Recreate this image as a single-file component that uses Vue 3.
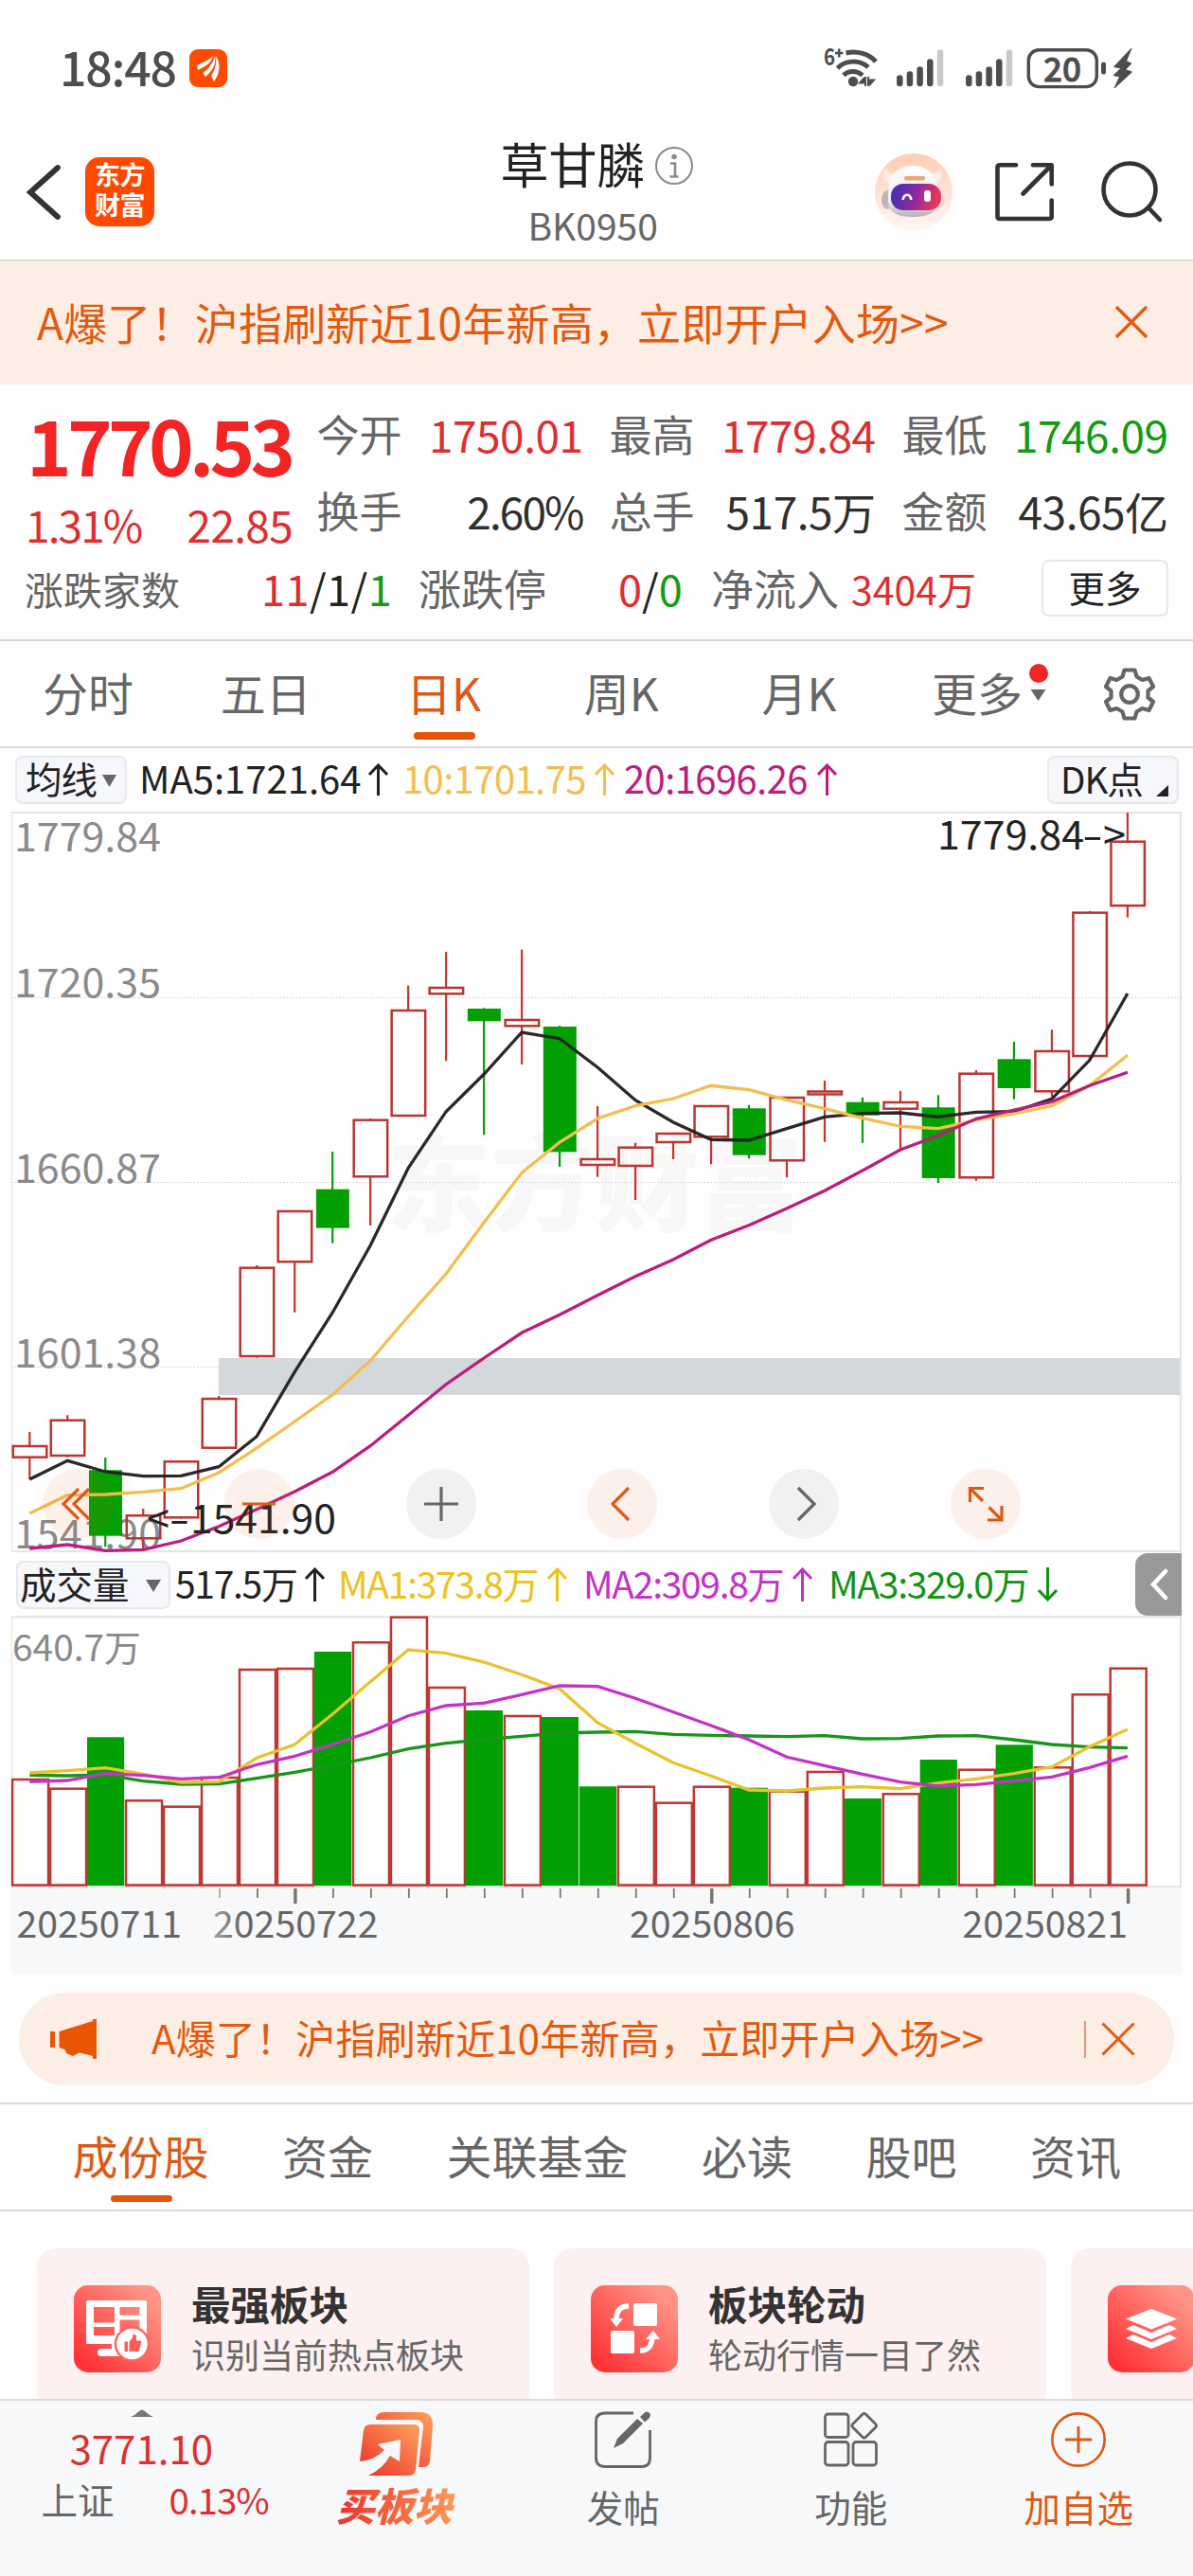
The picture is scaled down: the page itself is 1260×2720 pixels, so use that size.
<script setup>
const STEP = 39.986
const X0 = 31.3
const cx = (i) => X0 + STEP * i
const line = (ys) => ys.map((y, i) => `${cx(i).toFixed(1)},${y}`).join(' ')

// [direction, body top, body bottom, high, low]
const candles = [
  ['r', 1527, 1538.7, 1512, 1562], ['r', 1499.7, 1537, 1494.3, 1538.7], ['g', 1552.3, 1621.7, 1539, 1633.3],
  ['r', 1600.3, 1624.3, 1593, 1638], ['r', 1543.3, 1602.3, 1543, 1603.5], ['r', 1477, 1528.7, 1474, 1528],
  ['r', 1338.7, 1432, 1336, 1433.7], ['r', 1279, 1332.3, 1278, 1385.7], ['g', 1255.7, 1296.7, 1216, 1312.7],
  ['r', 1182.7, 1242.3, 1181, 1294], ['r', 1067, 1178, 1040.7, 1178], ['r', 1043, 1049.3, 1005, 1120.3],
  ['g', 1065, 1078.3, 1064.3, 1198.3], ['r', 1077, 1083.3, 1002.7, 1124], ['g', 1084, 1216.3, 1083, 1232],
  ['r', 1224, 1230, 1168, 1242.7], ['r', 1211.7, 1231, 1206.7, 1267], ['r', 1197, 1206, 1196, 1224],
  ['r', 1168, 1200.3, 1166.7, 1229.3], ['g', 1170.3, 1219.7, 1166.7, 1223.3], ['r', 1159, 1225.3, 1158, 1243.3],
  ['r', 1152.5, 1155.5, 1141, 1205.7], ['g', 1163.7, 1177.7, 1158.7, 1206.7], ['r', 1164, 1170.7, 1152, 1213.3],
  ['g', 1169.3, 1244, 1156.3, 1249], ['r', 1133.7, 1243.3, 1130, 1246.7], ['g', 1118.3, 1149, 1100, 1160.7],
  ['r', 1110, 1152.3, 1087.3, 1158], ['r', 963.7, 1115, 962, 1118.7], ['r', 888.7, 956.3, 858, 968.7],
]
const ma5 = line([1562, 1542.3, 1554, 1558.7, 1558.3, 1548.7, 1516.7, 1448.7, 1386, 1315, 1233.3, 1173.7, 1134.3, 1090, 1096.7, 1127, 1161.7, 1185, 1203.3, 1204, 1191.7, 1179.3, 1175.7, 1175, 1179.3, 1174.3, 1173.7, 1160.3, 1119.3, 1049])
const ma10 = line([1598, 1578.7, 1578, 1575.3, 1571.7, 1555, 1529, 1501, 1472.7, 1436.7, 1390, 1345, 1291, 1238.3, 1206, 1181, 1167.7, 1160, 1146.3, 1150.7, 1161.3, 1170.7, 1180.7, 1189.3, 1191.7, 1182.7, 1176, 1167.7, 1146, 1114.3])
const ma20 = line([1635, 1631, 1637.3, 1636.3, 1627, 1611.7, 1593.7, 1575, 1554.3, 1526.7, 1494.3, 1461.7, 1434, 1407.3, 1388.3, 1367.7, 1347.7, 1330, 1309.3, 1293.7, 1276, 1257.3, 1236, 1214, 1199, 1181.3, 1172, 1163.3, 1146.3, 1132.3])

const volumes = [1879, 1888.7, 1834.3, 1901.3, 1907.7, 1877, 1763, 1762, 1744, 1734.3, 1707.7, 1782, 1806, 1812, 1813, 1886.3, 1886.7, 1903.7, 1886.7, 1887.7, 1891.7, 1871, 1899, 1894.3, 1858, 1868.7, 1842.3, 1866.3, 1789.3, 1761.7]
const falling = new Set([2, 8, 12, 14, 15, 19, 22, 24, 26])
const vol1 = line([1872, 1869.7, 1866.7, 1873.3, 1882, 1881.3, 1856.3, 1842, 1810, 1775.7, 1742, 1745.7, 1755, 1768.3, 1783.3, 1819, 1840.7, 1861.3, 1875.3, 1890, 1891, 1888, 1886.7, 1888.7, 1882.7, 1878.3, 1872.7, 1865.7, 1844.3, 1826])
const vol2 = line([1881.3, 1880, 1872.7, 1874.7, 1878.3, 1876.7, 1863.3, 1854.3, 1842, 1828.7, 1811.7, 1801, 1798.3, 1789.3, 1780, 1780.7, 1793.3, 1807.7, 1822, 1837, 1855.3, 1864.3, 1873.3, 1881.7, 1886, 1884.3, 1880.3, 1876.3, 1866.3, 1854.3])
const vol3 = line([1874.3, 1875, 1874, 1880.7, 1884, 1883.7, 1877.7, 1871.3, 1864, 1856, 1846.7, 1840.7, 1836.7, 1833.3, 1830, 1829, 1828.3, 1831.3, 1832.3, 1833, 1833.7, 1832.7, 1836, 1835.7, 1833, 1832.7, 1837, 1842, 1844.7, 1845.7])

const ticks = Array.from({ length: 25 }, (_, k) => k + 5)
const bigTicks = [7, 18, 29]

const scale = [['1779.84', 899], ['1720.35', 1053], ['1660.87', 1248.7], ['1601.38', 1443.7], ['1541.90', 1635]]

const stats = [
  ['今开', '1750.01', 'up'], ['最高', '1779.84', 'up'], ['最低', '1746.09', 'down'],
  ['换手', '2.60%', 'pct'], ['总手', '517.5万', ''], ['金额', '43.65亿', ''],
]
const infoTabs = ['成份股', '资金', '关联基金', '必读', '股吧', '资讯']
</script>

<template>
  <div class="page">
    <div class="status">
      <span class="clock">18:48</span>
      <svg class="badge" width="40" height="40" viewBox="0 0 40 40">
        <rect width="40" height="40" rx="9" fill="#ff4a00" />
        <path d="M8 17C15 13 20 12 25 7C23 15 17 18 9 22ZM14 25C20 21 25 15 27 7C29 16 24 23 17 29ZM23 28C27 22 29 15 28 7C33 14 33 25 26 34Z" fill="#fff" />
      </svg>
      <svg class="sys" width="340" height="60" viewBox="865 42 340 60">
        <text x="870" y="69" font-size="24" font-weight="700" fill="#4d4d4d" textLength="12" lengthAdjust="spacingAndGlyphs">6</text>
        <path d="M882 56H890.500M886.200 51.500V60.500" stroke="#4d4d4d" stroke-width="2.600" />
        <g fill="none" stroke="#4d4d4d" stroke-width="5">
          <path d="M893.500 56C905 53 918 57 925 65" />
          <path d="M884.500 72C893 63 908 63 917 71" />
          <path d="M891 79.500C896 74 905 74 911 79.500" />
        </g>
        <circle cx="901" cy="86" r="5.200" fill="#4d4d4d" />
        <path d="M914 81V91M913 82L908 87.500H914M917 91V81M918 90L923 84.500H917" stroke="#4d4d4d" stroke-width="2" fill="#4d4d4d" />
        <g v-for="o in [0, 73]" :key="o" stroke-width="6.500" stroke-linecap="round" stroke="#4d4d4d">
          <path :d="`M${950.3 + o} 82.500V88M${960.900 + o} 78.500V88M${971.600 + o} 73.500V88M${982.300 + o} 65.500V88`" />
          <path :d="`M${993 + o} 55.500V88`" stroke="#cacaca" />
        </g>
        <rect x="1086.300" y="52.800" width="72" height="38.800" rx="11" fill="none" stroke="#4d4d4d" stroke-width="3.400" />
        <text x="1122" y="86" font-size="35" font-weight="500" fill="#4d4d4d" stroke="#4d4d4d" stroke-width="0.800" text-anchor="middle">20</text>
        <rect x="1163" y="65.500" width="5" height="13" rx="2.500" fill="#4d4d4d" />
        <path d="M1195 51L1176.500 70.500L1184 72L1176 79.500L1182.500 81L1177 93L1195.500 76L1188.500 73.500L1195 67L1189.500 64.500Z" fill="#4d4d4d" stroke="#4d4d4d" />
      </svg>
    </div>

    <header class="head">
      <svg class="back" width="40" height="64" viewBox="27 171 40 64">
        <path d="M61 177L32 203L61 229" fill="none" stroke="#333" stroke-width="5.800" stroke-linecap="round" />
      </svg>
      <div class="logo"><span>东方</span><span>财富</span></div>
      <div class="title">
        <div class="name">
          草甘膦
          <svg width="42" height="42" viewBox="0 0 42 42">
            <circle cx="21" cy="21" r="19" fill="none" stroke="#8a8a8a" stroke-width="2" />
            <circle cx="21" cy="11.500" r="2.800" fill="#8a8a8a" />
            <path d="M17 18.500H22V32.500M16.500 32.500H25.500" fill="none" stroke="#8a8a8a" stroke-width="2.600" />
          </svg>
        </div>
        <div class="code">BK0950</div>
      </div>
      <svg class="robot" width="84" height="84" viewBox="0 0 84 84">
        <defs>
          <linearGradient id="rb" x1="0" y1="0" x2="0" y2="1"><stop offset="0" stop-color="#ffcdb5" /><stop offset="1" stop-color="#fff7f3" /></linearGradient>
          <linearGradient id="visor" x1="0" y1="0" x2="1" y2="0.200"><stop offset="0" stop-color="#3b2fb4" /><stop offset="0.550" stop-color="#8a2a9e" /><stop offset="1" stop-color="#e8385a" /></linearGradient>
          <linearGradient id="skin" x1="0" y1="0" x2="0" y2="1"><stop offset="0" stop-color="#fff" /><stop offset="0.700" stop-color="#efe9ec" /><stop offset="1" stop-color="#b9aeb5" /></linearGradient>
        </defs>
        <circle cx="42" cy="42" r="41" fill="url(#rb)" />
        <path d="M13 17C8 23 9 31 18 33L27 22C18 23 15 22 13 17ZM68 17C73 23 72 31 64 33L56 22C65 23 67 22 68 17Z" fill="#fbefea" />
        <ellipse cx="14" cy="50" rx="6" ry="10" fill="#bfb6bc" />
        <ellipse cx="69" cy="49" rx="6" ry="10" fill="#e3dcdf" />
        <path d="M15 42C16 22 27 14 41 14S66 22 68 42V52C67 64 57 68 41 68S16 64 15 52Z" fill="url(#skin)" />
        <rect x="32" y="25" width="22" height="4.500" rx="2" fill="#e8a878" />
        <rect x="18" y="33" width="53" height="28" rx="13" fill="url(#visor)" />
        <path d="M30.500 50C32 43 38 43 39.500 50" fill="none" stroke="#fff" stroke-width="2.600" />
        <rect x="53" y="40" width="7" height="12" rx="3" fill="#fff" />
      </svg>
      <svg class="share" width="66" height="66" viewBox="1049 170 66 66">
        <g fill="none" stroke="#333" stroke-width="4.600" stroke-linecap="round" stroke-linejoin="round">
          <path d="M1073 174.300H1056Q1053.500 174.300 1053.500 177V228.500Q1053.500 231 1056 231H1108Q1110.700 231 1110.700 228.500V211.500" />
          <path d="M1091 174.300H1110.700V194.500M1109.500 175.500L1080.500 204.500" />
        </g>
      </svg>
      <svg class="search" width="68" height="68" viewBox="1161 168 68 68">
        <g fill="none" stroke="#333" stroke-width="4.600" stroke-linecap="round">
          <circle cx="1193" cy="200" r="27.500" />
          <path d="M1213 219.500L1225 232" />
        </g>
      </svg>
    </header>

    <div class="banner">
      <span>A爆了！沪指刷新近10年新高，立即开户入场&gt;&gt;</span>
      <svg width="36" height="36" viewBox="0 0 36 36"><path d="M2 2L34 34M34 2L2 34" stroke="#e2590f" stroke-width="3.400" /></svg>
    </div>

    <section class="quote">
      <div class="quote-top">
        <div class="price-box">
          <div class="price">1770.53</div>
          <div class="change"><span class="rate">1.31%</span><span>22.85</span></div>
        </div>
        <div class="stats">
          <div v-for="s in stats" :key="s[0]" class="stat"><label>{{ s[0] }}</label><b :class="s[2]">{{ s[1] }}</b></div>
        </div>
      </div>
      <div class="quote-row">
        <label class="small w-a">涨跌家数</label>
        <span class="w-b"><i class="up">11</i>/1/<i class="down">1</i></span>
        <label class="w-c">涨跌停</label>
        <span class="w-d"><i class="up">0</i>/<i class="down">0</i></span>
        <label class="w-e">净流入</label>
        <span class="up small w-f">3404万</span>
        <button class="more">更多</button>
      </div>
    </section>

    <nav class="periods">
      <span>分时</span><span>五日</span><span class="on">日K</span><span>周K</span><span>月K</span>
      <span class="more-tab">更多
        <svg width="24" height="42" viewBox="1085 699 24 42"><circle cx="1097" cy="710" r="10" fill="#f22424" /><path d="M1088.500 727H1104.500L1096.500 739Z" fill="#666" /></svg>
      </span>
      <svg class="gear" width="58" height="58" viewBox="-29 -29 58 58">
        <g fill="none" stroke="#666" stroke-width="4.200" stroke-linejoin="round">
          <path d="M-5.500 -25.500H5.500L7.500 -18.500L13.500 -15L20.500 -17L25 -8L19.500 -3.500V3.500L25 8L20.500 17L13.500 15L7.500 18.500L5.500 25.500H-5.500L-7.500 18.500L-13.500 15L-20.500 17L-25 8L-19.500 3.500V-3.500L-25 -8L-20.500 -17L-13.500 -15L-7.500 -18.500Z" />
          <circle r="8.800" />
        </g>
      </svg>
    </nav>

    <div class="legend ma">
      <span class="chip chip-ma">均线<svg width="15" height="13" viewBox="0 0 15 13"><path d="M0 0H15L7.500 13Z" fill="#666" /></svg></span>
      <span class="m1">MA5:1721.64<svg class="arr" viewBox="0 0 21 34"><path d="M10.500 34V2M1 12L10.500 2L20 12" /></svg></span>
      <span class="m2">10:1701.75<svg class="arr" viewBox="0 0 21 34"><path d="M10.500 34V2M1 12L10.500 2L20 12" /></svg></span>
      <span class="m3">20:1696.26<svg class="arr" viewBox="0 0 21 34"><path d="M10.500 34V2M1 12L10.500 2L20 12" /></svg></span>
      <span class="chip chip-dk">DK点<svg width="13" height="12" viewBox="0 0 13 12"><path d="M13 0V12H0Z" fill="#222" /></svg></span>
    </div>

    <div class="kline">
      <svg width="1260" height="784" viewBox="0 856 1260 784">
        <text x="628" y="1292" class="mark" text-anchor="middle" textLength="440" lengthAdjust="spacingAndGlyphs">东方财富</text>
        <g stroke="#cfcfcf" stroke-width="1.200" stroke-dasharray="1.500 2"><path d="M12 1053.500H1247M12 1248.500H1247M12 1443.500H1247" /></g>
        <rect x="231" y="1434" width="1016" height="39" fill="#d4d7dc" />
        <path d="M12 858H1247V1638H12" fill="none" stroke="#e4e4e4" stroke-width="2" />
        <path d="M12.500 858V1638" stroke="#e4e4e4" />
        <text v-for="s in scale" :key="s[0]" x="15" :y="s[1]" class="scale" textLength="155" lengthAdjust="spacingAndGlyphs">{{ s[0] }}</text>
        <g v-for="(c, i) in candles" :key="i">
          <template v-if="c[0] === 'r'">
            <path :d="`M${cx(i)} ${c[3]}V${c[1]}M${cx(i)} ${c[2]}V${c[4]}`" stroke="#c43430" stroke-width="2.200" />
            <rect :x="cx(i) - 17.500" :y="c[1]" width="35.500" :height="c[2] - c[1]" fill="none" stroke="#b93632" stroke-width="2.500" />
          </template>
          <template v-else>
            <path :d="`M${cx(i)} ${c[3]}V${c[4]}`" stroke="#0b9a0b" stroke-width="2.200" />
            <rect :x="cx(i) - 17.300" :y="c[1]" width="35" :height="c[2] - c[1]" fill="#02a002" />
          </template>
        </g>
        <g fill="none" stroke-width="3.300">
          <polyline :points="ma5" stroke="#222" stroke-opacity="0.970" />
          <polyline :points="ma10" stroke="#f2be50" />
          <polyline :points="ma20" stroke="#bb1e7c" />
        </g>
        <text x="990" y="896.700" class="peak" textLength="155" lengthAdjust="spacingAndGlyphs">1779.84</text>
        <text x="1143" y="896.700" class="peak" textLength="22" lengthAdjust="spacingAndGlyphs">-</text>
        <text x="1165" y="896.700" class="peak" textLength="24" lengthAdjust="spacingAndGlyphs">&gt;</text>
        <text x="155" y="1618.700" class="peak" textLength="24" lengthAdjust="spacingAndGlyphs">&lt;</text>
        <text x="178.500" y="1618.700" class="peak" textLength="22" lengthAdjust="spacingAndGlyphs">-</text>
        <text x="201" y="1618.700" class="peak" textLength="154" lengthAdjust="spacingAndGlyphs">1541.90</text>
      </svg>
      <div class="tools">
        <button class="warm"><svg viewBox="0 0 74 74"><path d="M38 21L22 37L38 53M49 21L33 37L49 53" /></svg></button>
        <button class="warm"><svg viewBox="0 0 74 74"><path d="M19 37H54" /></svg></button>
        <button><svg viewBox="0 0 74 74"><path d="M19 37H55M37 19V55" /></svg></button>
        <button class="warm"><svg viewBox="0 0 74 74"><path d="M44 20L27 37L44 54" /></svg></button>
        <button><svg viewBox="0 0 74 74"><path d="M31 20L48 37L31 54" /></svg></button>
        <button class="warm"><svg viewBox="0 0 74 74"><path d="M20.500 35V20.500H35M20.500 20.500L34 34M54 39V54H39M54 54L40.500 40.500" /></svg></button>
      </div>
    </div>

    <div class="legend vol">
      <span class="chip chip-vol">成交量<svg width="16" height="13" viewBox="0 0 16 13"><path d="M0 0H16L8 13Z" fill="#666" /></svg></span>
      <span class="v0">517.5万<svg class="arr" viewBox="0 0 21 36"><path d="M10.500 36V2M1 12L10.500 2L20 12" /></svg></span>
      <span class="v1">MA1:373.8万<svg class="arr" viewBox="0 0 21 36"><path d="M10.500 36V2M1 12L10.500 2L20 12" /></svg></span>
      <span class="v2">MA2:309.8万<svg class="arr" viewBox="0 0 21 36"><path d="M10.500 36V2M1 12L10.500 2L20 12" /></svg></span>
      <span class="v3">MA3:329.0万<svg class="arr" viewBox="0 0 21 36"><path d="M10.500 0V34M1 24L10.500 34L20 24" /></svg></span>
      <span class="drawer"><svg width="20" height="34" viewBox="0 0 20 34"><path d="M17 3L4 17L17 31" fill="none" stroke="#fff" stroke-width="4.500" stroke-linecap="round" /></svg></span>
    </div>

    <svg class="volume" width="1260" height="380" viewBox="0 1706 1260 380">
      <defs>
        <linearGradient id="fade" gradientUnits="userSpaceOnUse" x1="222" y1="0" x2="256" y2="0"><stop offset="0" stop-color="#aaa" /><stop offset="1" stop-color="#666" /></linearGradient>
      </defs>
      <rect x="12" y="1993" width="1236" height="92" fill="#f7f8fa" />
      <path d="M12 1707.300H1247V1992H12" fill="none" stroke="#e4e4e4" stroke-width="2" />
      <path d="M12.500 1707V1992" stroke="#e4e4e4" />
      <text x="13" y="1753.700" class="volmax" textLength="136" lengthAdjust="spacingAndGlyphs">640.7万</text>
      <template v-for="(v, i) in volumes" :key="i">
        <rect v-if="falling.has(i)" :x="cx(i) - 19.300" :y="v" width="39.200" :height="1991 - v" fill="#02a002" />
        <rect v-else :x="cx(i) - 18.200" :y="v" width="38" :height="1990.500 - v" fill="none" stroke="#bd3733" stroke-width="2.500" />
      </template>
      <g fill="none" stroke-width="3.300">
        <polyline :points="vol3" stroke="#1b941b" />
        <polyline :points="vol1" stroke="#e8c22f" />
        <polyline :points="vol2" stroke="#c433c8" />
      </g>
      <g stroke="#777">
        <path v-for="i in ticks" :key="i" :d="`M${cx(i) + 0.700} 1994V${bigTicks.includes(i) ? 2010 : 2004}`" :stroke-width="bigTicks.includes(i) ? 3.500 : 1.800" :stroke="i === 5 ? '#aaa' : '#777'" />
      </g>
      <g class="dates">
        <text x="17.500" y="2046">20250711</text>
        <text x="225" y="2046" fill="url(#fade)">20250722</text>
        <text x="665" y="2046">20250806</text>
        <text x="1016.500" y="2046">20250821</text>
      </g>
    </svg>

    <div class="pill">
      <svg class="horn" width="50" height="44" viewBox="52 2131 50 44"><path d="M53 2145H58V2162H53ZM62.500 2145L98 2134V2132H102V2174H98V2171L84 2167.500L77 2171L70 2168L69 2164.500L62.500 2162Z" fill="#e85504" /></svg>
      <span>A爆了！沪指刷新近10年新高，立即开户入场&gt;&gt;</span>
      <i></i>
      <svg class="x" width="36" height="36" viewBox="0 0 36 36"><path d="M1.500 1.500L34.500 34.500M34.500 1.500L1.500 34.500" stroke="#e2590f" stroke-width="3" /></svg>
    </div>

    <nav class="info">
      <span v-for="(t, i) in infoTabs" :key="t" :class="{ on: i === 0 }">{{ t }}</span>
    </nav>

    <div class="cards">
      <div class="card">
        <svg width="92" height="92" viewBox="0 0 92 92">
          <defs><linearGradient id="ic" x1="0" y1="1" x2="1" y2="0"><stop offset="0.100" stop-color="#ff3236" /><stop offset="0.850" stop-color="#ff9384" /></linearGradient></defs>
          <rect width="92" height="92" rx="15" fill="url(#ic)" />
          <path d="M13 18Q13 16 15 16H75Q77 16 77 18V62H13ZM21 23V39.500H43V23ZM48.500 23V31.500H69.500V23ZM21 44V53H43V44ZM48.500 36.500V53H69.500V36.500Z" fill="#fff" fill-rule="evenodd" />
          <path d="M40 61V67H29Q25 67 25 71T29 75H60V61Z" fill="#fff" />
          <circle cx="61.500" cy="62" r="17.500" fill="#fff" stroke="#ff6660" stroke-width="2.500" />
          <path d="M53.500 59.500H57V70H53.500ZM58.500 59.500C61 57 62.500 55 62.500 51.500Q65.500 51 66 54V58.500H70.500Q71.500 59 71 60.500L69 69Q68.500 70 67 70H58.500Z" fill="#ff5b57" />
        </svg>
        <div><h3>最强板块</h3><p>识别当前热点板块</p></div>
      </div>
      <div class="card">
        <svg width="92" height="92" viewBox="0 0 92 92">
          <rect width="92" height="92" rx="15" fill="url(#ic)" />
          <rect x="45" y="19" width="25" height="24" rx="2" fill="#fff" />
          <rect x="21" y="48" width="25" height="24" rx="2" fill="#fff" />
          <path d="M40 22C31 22 27 27 27 36M52 69C60 69 64 65 65 56" fill="none" stroke="#fff" stroke-width="5.500" />
          <path d="M20 35H34L27 44ZM58 57H73L66 48Z" fill="#fff" />
        </svg>
        <div><h3>板块轮动</h3><p>轮动行情一目了然</p></div>
      </div>
      <div class="card">
        <svg width="92" height="92" viewBox="0 0 92 92">
          <rect width="92" height="92" rx="15" fill="url(#ic)" />
          <path d="M46 25L73 35.500L46 46.500L19 35.500Z" fill="#fff" />
          <path d="M27 42L46 50L65 42L73 46L46 57L19 46ZM27 52L46 60L65 52L73 56L46 67L19 56Z" fill="#fff" />
        </svg>
      </div>
    </div>

    <footer class="foot">
      <div class="index">
        <svg width="24" height="8" viewBox="0 0 24 8"><path d="M0 8Q5 6 9 2Q12 -1 15 2Q19 6 24 8Z" fill="#777" /></svg>
        <div class="idx">3771.10</div>
        <div class="sub"><span>上证</span><em>0.13%</em></div>
      </div>
      <div class="buy">
        <svg width="78" height="70" viewBox="0 0 78 70">
          <defs><linearGradient id="buy" x1="0" y1="1" x2="1" y2="0"><stop offset="0" stop-color="#ea2f2a" /><stop offset="1" stop-color="#fda35c" /></linearGradient></defs>
          <path d="M17 9Q17 1 26 1H65Q78 2 77 16L74 53Q73 59 67 59H62L67 17Q67 9 59 9Z" fill="url(#buy)" />
          <path d="M4 20Q5 14 11 14H57Q64 14 63 21L59 62Q58 68 51 68H9Q24 61 32 47L42 53L43 30L19 35L26 41Q15 52 0 53Z" fill="url(#buy)" />
        </svg>
        <span>买板块</span>
      </div>
      <div class="act">
        <svg width="62" height="60" viewBox="628 2546 62 60">
          <path d="M670 2548H640Q630.500 2548 630.500 2557V2595Q630.500 2604.500 640 2604.500H679Q687.500 2604.500 687.500 2595V2566" fill="none" stroke="#666" stroke-width="2.800" />
          <path d="M649 2585L653 2575L674 2554L680 2559L659 2580ZM677 2552L683 2546.500Q690 2547 687 2553L682 2557.500Z" fill="#666" />
        </svg>
        <span>发帖</span>
      </div>
      <div class="act">
        <svg width="60" height="60" viewBox="870 2546 60 60">
          <g fill="none" stroke="#666" stroke-width="2.800">
            <rect x="872.500" y="2549" width="24.500" height="24.500" rx="3" /><rect x="872.500" y="2578.500" width="24.500" height="24.500" rx="3" /><rect x="902" y="2578.500" width="24.500" height="24.500" rx="3" />
            <rect x="904" y="2551.500" width="19.500" height="19.500" rx="2.500" transform="rotate(45 913.700 2561.200)" />
          </g>
        </svg>
        <span>功能</span>
      </div>
      <div class="act add">
        <svg width="64" height="64" viewBox="-32 -32 64 64"><circle r="29.500" fill="none" stroke="#dc5a16" stroke-width="2.800" /><path d="M-15 0H15M0 -15V15" stroke="#dc5a16" stroke-width="3" /></svg>
        <span>加自选</span>
      </div>
    </footer>
  </div>
</template>

<style>
body { background: #fff; }
</style>

<style scoped>
.page { width: 1260px; height: 2720px; overflow: hidden; display: flex; flex-direction: column; font-family: "Noto Sans CJK SC", sans-serif; background: #fefefe; color: #222; }
.page > * { flex: none; box-sizing: border-box; }
svg { display: block; flex: none; }
svg text { font-family: "Noto Sans CJK SC", sans-serif; }
label, i, em { font-style: normal; }
button { font: inherit; border: 0; padding: 0; background: none; }

.status { height: 144px; display: flex; align-items: center; padding-left: 63px; }
.clock { font-size: 50px; line-height: 60px; width: 137px; color: #4d4d4d; font-weight: 500; letter-spacing: -1.200px; padding-bottom: 6px; box-sizing: border-box; }
.sys { margin-left: 625px; }

.head { height: 132px; border-bottom: 2px solid #d9dadc; display: flex; align-items: flex-start; padding-left: 27px; }
.back { margin-top: 27px; }
.logo { width: 73px; height: 73px; margin: 22px 0 0 23px; border-radius: 15px; background: #ff4800; color: #fff; font-weight: 700; font-size: 27px; line-height: 32px; letter-spacing: -0.5px; display: flex; flex-direction: column; align-items: center; padding-top: 2px; box-sizing: border-box; }
.title { width: 400px; margin-left: 348px; }
.name { font-size: 51px; line-height: 56px; display: flex; align-items: center; gap: 9.500px; margin: 0 0 0 17.500px; }
.name svg { margin-top: 5px; }
.code { font-size: 39px; line-height: 40px; color: #666; margin: 17px 0 0 46.500px; }
.robot { margin: 17px 0 0 12px; }
.share { margin: 26px 0 0 42px; }
.search { margin: 24px 0 0 46px; }

.banner { height: 130px; background: #fceee5; color: #e2590f; font-size: 46px; line-height: 60px; letter-spacing: 0.200px; display: flex; justify-content: space-between; align-items: center; padding: 0 47px 5px 39px; }
.banner svg { margin-top: 2px; }

.quote { height: 271px; border-bottom: 2px solid #dadada; padding-top: 11px; }
.up { color: #dc3030; }
.down { color: #159a15; }
.quote-top { display: flex; height: 163px; }
.price-box { width: 309px; padding-left: 27px; box-sizing: border-box; margin-right: 25.500px; }
.price { font-size: 81px; font-weight: 700; line-height: 90px; margin: 6px 0 0 1px; letter-spacing: -4.800px; color: #f22424; }
.change { display: flex; justify-content: space-between; font-size: 46px; line-height: 60px; letter-spacing: -0.700px; margin-top: 10px; color: #dc3030; }
.rate { letter-spacing: -1.900px; }
.stats { display: grid; grid-template-columns: repeat(3, 281px); grid-auto-rows: 81px; column-gap: 28px; }
.stat { display: flex; justify-content: space-between; align-items: center; font-size: 45px; line-height: 60px; }
.stat b { font-weight: 400; font-size: 46px; letter-spacing: -0.5px; color: #2f2f2f; }
.stat b.up { color: #dc3030; }
.stat b.down { color: #159a15; }
.stat b.pct { letter-spacing: -1.900px; }
label { color: #666; }
.quote-row { display: flex; align-items: center; height: 82px; padding-left: 26px; font-size: 45px; line-height: 60px; }
.quote-row .small { font-size: 41px; }
.w-a { width: 250px; }
.w-b { width: 166px; letter-spacing: 0.5px; }
.w-c { width: 211px; }
.w-d { width: 98px; }
.w-e { width: 148px; }
.w-f { width: 201px; }
.more { width: 134px; height: 60px; box-sizing: border-box; border: 2px solid #e6e7ea; border-radius: 8px; font-size: 38.500px; line-height: 50px; color: #222; padding-bottom: 4px; }

.periods { height: 113px; border-bottom: 2px solid #dadada; display: flex; align-items: center; font-size: 48px; line-height: 60px; color: #666; }
.periods > span { width: 187.800px; text-align: center; height: 100%; padding-top: 23px; box-sizing: border-box; position: relative; left: -1px; }
.periods > .more-tab { width: 130px; margin-left: 46px; display: flex; text-align: left; gap: 5px; }
.periods .on, .info .on { color: #dc5a16; }
.periods .on::after { content: ""; position: absolute; left: 62px; top: 96px; width: 65px; height: 8px; border-radius: 4px; background: #e55407; }
.gear { margin: 0 0 0 49.500px; }

.legend { display: flex; align-items: center; font-size: 40px; line-height: 50px; white-space: nowrap; }
.ma { height: 66px; padding-left: 16px; }
.chip { box-sizing: border-box; height: 51px; background: #f6f7fa; border: 2px solid #e6e8ec; border-radius: 8px; display: flex; align-items: center; font-size: 38.500px; line-height: 42px; color: #222; padding-bottom: 5px; }
.chip-ma { width: 118px; padding-left: 9px; gap: 6px; letter-spacing: -1px; }
.chip svg { margin-top: 8px; }
.legend > span:not(.chip):not(.drawer) { display: flex; align-items: center; padding-bottom: 4px; }
.arr { width: 21px; height: 34px; fill: none; stroke: currentColor; stroke-width: 3; margin-top: 4px; }
.m1 { width: 278px; margin-left: 13px; gap: 8px; }
.m2 { width: 234px; color: #f2be50; gap: 9px; letter-spacing: -0.600px; }
.m3 { width: 447px; color: #bb1e7c; gap: 10px; letter-spacing: -0.600px; }
.chip-dk { width: 139px; padding-left: 12px; gap: 14px; letter-spacing: -1px; }
.ma .chip-dk svg { margin-top: 28px; }

.kline { height: 784px; position: relative; }
.mark { font-size: 112px; font-weight: 900; fill: #f7f7f7; }
.scale { font-size: 42px; fill: #8a8a8a; }
.peak { font-size: 42px; fill: #222; }
.tools { position: absolute; left: 45px; top: 695px; display: flex; gap: 117.800px; }
.tools button { width: 74px; height: 74px; border-radius: 50%; background: rgba(0, 0, 0, 0.05); color: #666; }
.tools svg { width: 74px; height: 74px; fill: none; stroke: currentColor; stroke-width: 3.200; }
.tools .warm { background: rgba(240, 90, 20, 0.09); color: #dc5a16; }

.vol { height: 66px; padding-left: 17px; font-size: 39px; letter-spacing: -1.300px; }
.chip-vol { width: 163px; padding-left: 2px; gap: 17px; letter-spacing: 0; }
.v0 { width: 172px; margin-left: 5px; gap: 8px; }
.v1 { width: 259px; color: #edc21f; gap: 10px; }
.v2 { width: 259px; color: #c433c8; gap: 10px; }
.v3 { width: 324px; color: #149314; gap: 10px; }
.vol .arr { height: 36px; }
.drawer { width: 49px; height: 66px; background: #999; border-radius: 13px 0 0 13px; display: flex; align-items: center; justify-content: center; }

.volmax { font-size: 38px; fill: #8a8a8a; }
.dates { font-size: 39.300px; fill: #666; }

.pill { width: 1220px; height: 98px; margin: 18px 0 0 20px; border-radius: 49px; background: #fceee5; color: #e2590f; font-size: 42px; line-height: 60px; display: flex; align-items: center; padding-left: 32px; }
.pill span { width: 985px; margin-left: 58px; padding-bottom: 5px; letter-spacing: 0.200px; }
.pill i { width: 2px; height: 39px; background: #dd9b74; }
.pill .x { margin-left: 16px; }

.info { height: 115px; margin-top: 18px; border-top: 2px solid #dadada; border-bottom: 2px solid #dadada; display: flex; gap: 77.500px; padding: 23px 0 0 76.500px; font-size: 48px; line-height: 60px; color: #666; }
.info span { position: relative; white-space: nowrap; }
.info .on::after { content: ""; position: absolute; left: 40px; top: 73px; width: 65px; height: 7px; border-radius: 4px; background: #e55407; }

.cards { display: flex; gap: 26px; padding: 39px 0 0 39px; height: 198px; overflow: hidden; }
.card { flex: none; width: 520px; height: 170px; border-radius: 20px; background: #fcf0f0; box-sizing: border-box; padding: 39px 0 0 39px; display: flex; gap: 32px; }
.card h3 { margin: -6px 0 0; font-size: 41.500px; line-height: 50px; font-weight: 700; color: #333; }
.card p { margin: 4px 0 0; font-size: 36px; line-height: 48px; color: #666; }

.foot { height: 187px; border-top: 2px solid #dadbdd; background: #f7f8fa; display: flex; align-items: flex-start; }
.index { width: 300px; }
.index svg { margin: 9px 0 0 138px; }
.idx { font-size: 42px; line-height: 50px; color: #dc3030; margin: 7px 0 0 73.500px; }
.sub { display: flex; font-size: 38.500px; line-height: 48px; color: #666; margin: 5px 0 0 43.500px; }
.sub em { color: #dc3030; margin-left: 58px; letter-spacing: -1px; }
.buy { width: 238px; display: flex; flex-direction: column; align-items: center; }
.buy svg { margin-top: 11px; }
.buy span { margin: 3px 0 0 -5px; font-size: 41px; line-height: 50px; font-weight: 900; font-style: italic; background: linear-gradient(90deg, #ea2f2a, #fd9a55); -webkit-background-clip: text; background-clip: text; color: transparent; padding: 0 6px; }
.act { width: 240.500px; display: flex; flex-direction: column; align-items: center; font-size: 38.500px; line-height: 48px; color: #666; }
.act svg { margin-top: 11px; height: 60px; overflow: visible; }
.act span { margin-top: 16px; }
.add { color: #dc5a16; }
</style>
